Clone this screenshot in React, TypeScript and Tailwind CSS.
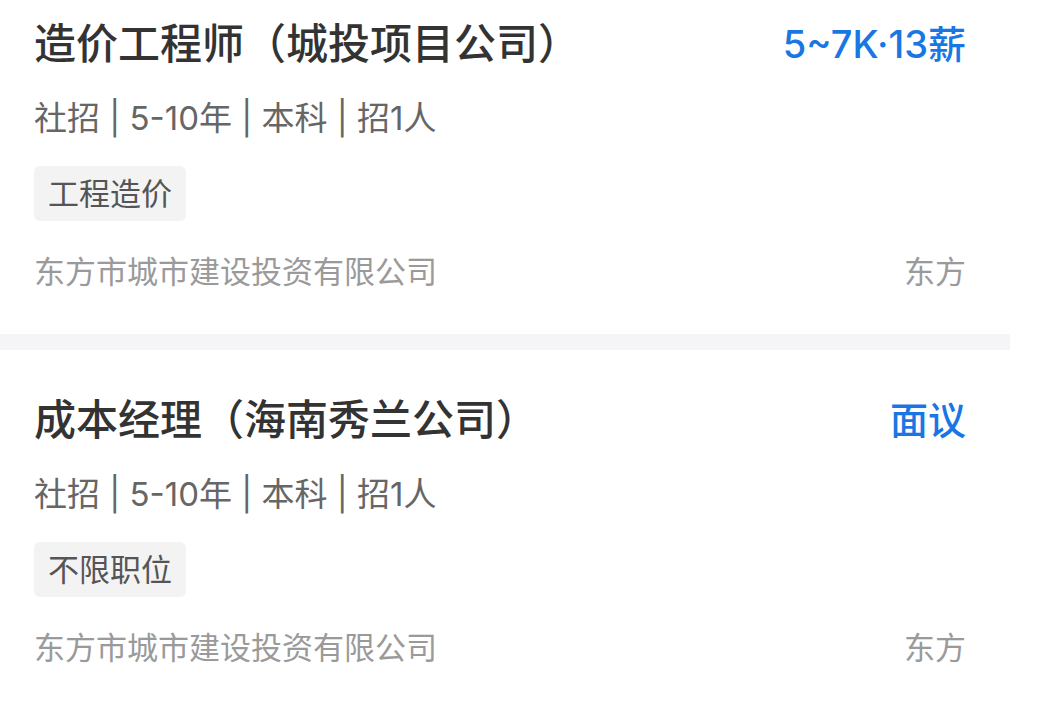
import React from "react";

type Job = {
  title: string;
  salary: string;
  meta: string;
  tag: string;
  company: string;
  city: string;
};

const jobs: Job[] = [
  {
    title: "造价工程师（城投项目公司）",
    salary: "5~7K·13薪",
    meta: "社招 | 5-10年 | 本科 | 招1人",
    tag: "工程造价",
    company: "东方市城市建设投资有限公司",
    city: "东方",
  },
  {
    title: "成本经理（海南秀兰公司）",
    salary: "面议",
    meta: "社招 | 5-10年 | 本科 | 招1人",
    tag: "不限职位",
    company: "东方市城市建设投资有限公司",
    city: "东方",
  },
];

function JobCard({ job }: { job: Job }) {
  return (
    <div className="bg-white pl-[34px] pr-[44px] pt-[46px] pb-[44px]">
      <div className="flex items-center justify-between">
        <p className="text-[42px] leading-[48px] font-medium text-[#333333]">{job.title}</p>
        <p className="text-[38px] leading-[48px] font-medium text-[#1a76e3]">{job.salary}</p>
      </div>
      <p className="mt-[30px] text-[33px] leading-[40px] text-[#666666]">{job.meta}</p>
      <div className="mt-[28px] flex">
        <span className="rounded-[6px] bg-[#f3f3f3] px-[14px] py-[8px] text-[31px] leading-[39px] text-[#555555]">
          {job.tag}
        </span>
      </div>
      <div className="mt-[33px] flex items-center justify-between text-[31px] leading-[36px] text-[#9a9a9a]">
        <span>{job.company}</span>
        <span>{job.city}</span>
      </div>
    </div>
  );
}

export default function App() {
  return (
    <div
      className="h-[708px] w-[1059px] overflow-hidden bg-white"
      style={{ fontFamily: 'Inter, "Noto Sans CJK SC", sans-serif' }}
    >
      <div className="-mt-[26px] w-[1010px]">
        {jobs.map((job, i) => (
          <div key={i}>
            {i > 0 && <div className="h-[16px] bg-[#f5f5f7]" />}
            <JobCard job={job} />
          </div>
        ))}
      </div>
    </div>
  );
}
